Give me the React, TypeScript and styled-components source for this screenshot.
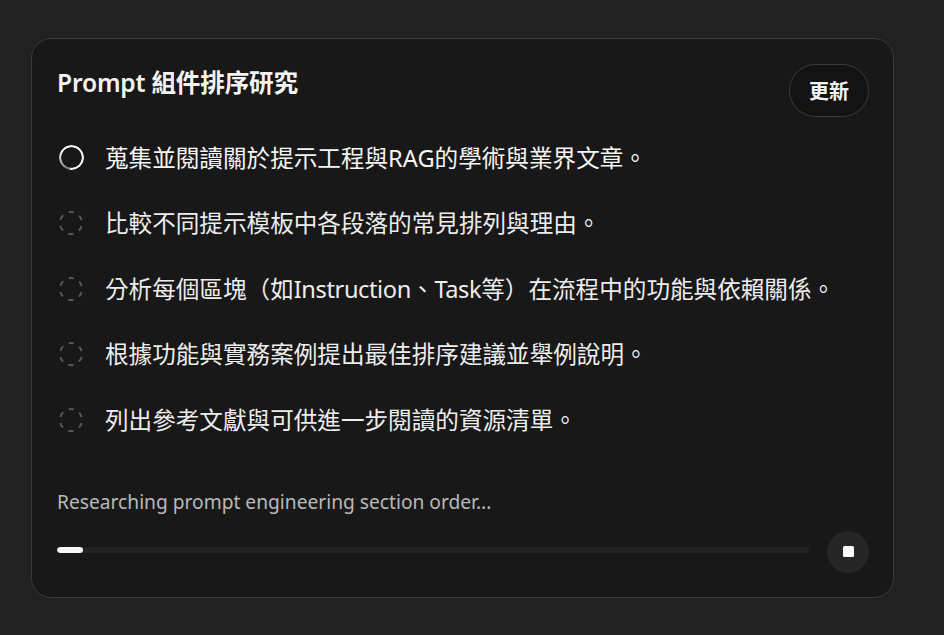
import React from "react";
import styled, { createGlobalStyle } from "styled-components";

const Global = createGlobalStyle`
  html, body { margin: 0; padding: 0; background: #212121; }
  body {
    font-family: "Noto Sans", "Noto Sans CJK TC", sans-serif;
    -webkit-font-smoothing: antialiased;
  }
`;

const Page = styled.div`
  height: 635px;
  box-sizing: border-box;
  padding: 38px 50px 37px 31px;
  display: flex;
`;

const Card = styled.section`
  flex: 1;
  box-sizing: border-box;
  background: #181818;
  border: 1px solid #3a3a3a;
  border-radius: 20px;
  padding: 25px 24px 21px 25px;
  display: flex;
  flex-direction: column;
`;

const Header = styled.header`
  display: flex;
  justify-content: space-between;
  align-items: flex-start;
`;

const Title = styled.h1`
  margin: 3px 0 0;
  font-size: 24.6px;
  line-height: 32px;
  font-weight: 600;
  color: #f3f3f3;
  letter-spacing: -0.2px;
`;

const PillButton = styled.button`
  width: 80px;
  height: 53px;
  border-radius: 27px;
  border: 1px solid #3b3b3b;
  background: #131313;
  color: #f4f4f4;
  font-family: inherit;
  font-size: 20px;
  font-weight: 600;
  cursor: pointer;
`;

const List = styled.ul`
  list-style: none;
  margin: 8px 0 0;
  padding: 0;
  display: flex;
  flex-direction: column;
`;

const Row = styled.li`
  height: 65.5px;
  display: flex;
  align-items: center;
  gap: 20px;
`;

const IconBox = styled.span`
  width: 28px;
  height: 28px;
  display: flex;
  align-items: center;
  justify-content: center;
  flex: none;
`;

const Spinner = styled.span`
  width: 25px;
  height: 25px;
  border-radius: 50%;
  background: conic-gradient(from 190deg, #777 0deg, #999 40deg, #f4f4f4 110deg, #f4f4f4 360deg);
  -webkit-mask: radial-gradient(farthest-side, transparent calc(100% - 2.6px), #000 calc(100% - 2px));
  mask: radial-gradient(farthest-side, transparent calc(100% - 2.6px), #000 calc(100% - 2px));
`;

const ItemText = styled.span<{ $active?: boolean }>`
  font-size: 23.6px;
  line-height: 32px;
  color: ${(p) => (p.$active ? "#f5f5f5" : "#ededed")};
  font-weight: 400;
  white-space: nowrap;
`;

const Latin = styled.span`
  letter-spacing: -0.4px;
`;

const Status = styled.p`
  margin: 35px 0 0;
  font-size: 19.2px;
  line-height: 27px;
  color: #b8b8b8;
`;

const Footer = styled.div`
  margin-top: 16px;
  display: flex;
  align-items: center;
  gap: 18px;
`;

const Track = styled.div`
  flex: 1;
  height: 6px;
  border-radius: 3px;
  background: #232323;
  overflow: hidden;
  margin-top: -3px;
`;

const Fill = styled.div`
  height: 100%;
  background: #f5f5f5;
  border-radius: 3px;
`;

const StopButton = styled.button`
  width: 42px;
  height: 42px;
  border-radius: 50%;
  border: none;
  background: #262626;
  display: flex;
  align-items: center;
  justify-content: center;
  padding: 0;
  cursor: pointer;
`;

const StopSquare = styled.span`
  width: 11px;
  height: 11px;
  border-radius: 1.5px;
  background: #fafafa;
`;

const DashedCircle = () => {
  const r = 11;
  const c = 2 * Math.PI * r;
  const seg = c / 6;
  const dash = 5.2;
  const dashAngle = (dash / c) * 360;
  return (
    <svg width="26" height="26" viewBox="0 0 26 26">
      <circle
        cx="13"
        cy="13"
        r={r}
        fill="none"
        stroke="#575757"
        strokeWidth="2"
        strokeDasharray={`${dash} ${seg - dash}`}
        transform={`rotate(${30 - dashAngle / 2} 13 13)`}
      />
    </svg>
  );
};

const items: React.ReactNode[] = [
  "蒐集並閱讀關於提示工程與RAG的學術與業界文章。",
  "比較不同提示模板中各段落的常見排列與理由。",
  <>
    分析每個區塊（如<Latin>Instruction</Latin>、<Latin>Task</Latin>等）在流程中的功能與依賴關係。
  </>,
  "根據功能與實務案例提出最佳排序建議並舉例說明。",
  "列出參考文獻與可供進一步閱讀的資源清單。",
];

export default function App() {
  const progress = 3.5;
  return (
    <>
      <Global />
      <Page>
        <Card>
          <Header>
            <Title>Prompt 組件排序研究</Title>
            <PillButton>更新</PillButton>
          </Header>
          <List>
            {items.map((t, i) => (
              <Row key={i}>
                <IconBox>{i === 0 ? <Spinner /> : <DashedCircle />}</IconBox>
                <ItemText $active={i === 0}>{t}</ItemText>
              </Row>
            ))}
          </List>
          <Status>Researching prompt engineering section order...</Status>
          <Footer>
            <Track>
              <Fill style={{ width: `${progress}%` }} />
            </Track>
            <StopButton aria-label="停止">
              <StopSquare />
            </StopButton>
          </Footer>
        </Card>
      </Page>
    </>
  );
}
